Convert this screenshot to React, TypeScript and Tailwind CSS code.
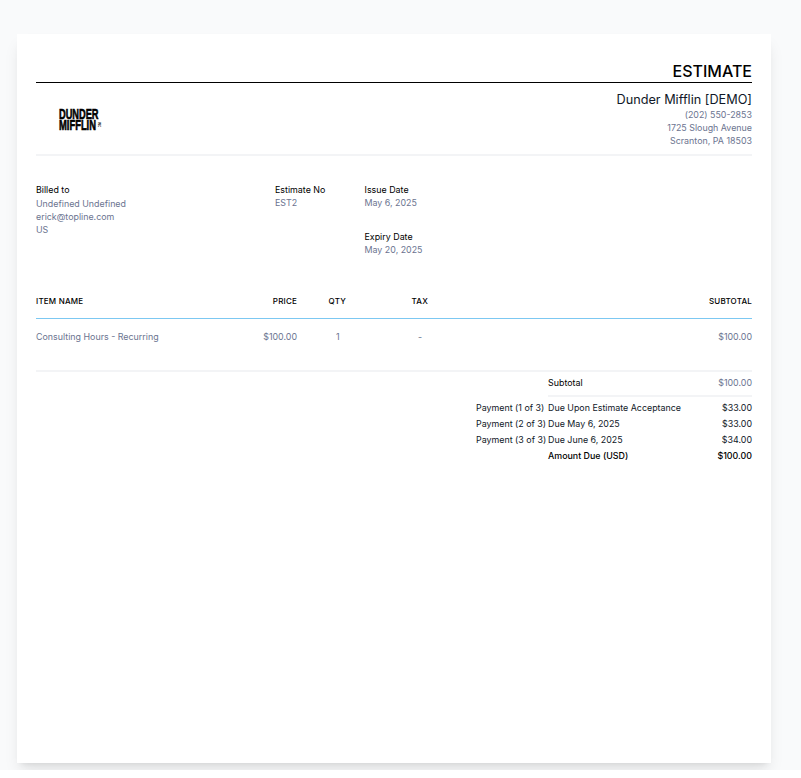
export default function App() {
  return (
    <div className="h-[770px] bg-gray-50 pt-[34px] pl-[17px] pr-[30px] font-['Inter',sans-serif] text-[8.9px] leading-[13px]">
      <div className="h-[729px] w-[754px] bg-white px-[19px] pt-[28px] shadow-lg">
        <div className="border-b border-black pb-[1px] text-right text-base leading-[19px] font-medium text-black">
          ESTIMATE
        </div>

        <div className="flex justify-between border-b-2 border-[#f3f4f6] pt-[8px] pb-[7px]">
          <div className="pt-[18px] pl-[23px]">
            <Logo />
          </div>
          <div className="text-right">
            <p className="text-[12.7px] leading-[17px] text-gray-900">Dunder Mifflin [DEMO]</p>
            <p className="text-[#6b7490]">(202) 550-2853</p>
            <p className="text-[#6b7490]">1725 Slough Avenue</p>
            <p className="text-[#6b7490]">Scranton, PA 18503</p>
          </div>
        </div>

        <div className="flex pt-[27px]">
          <div className="w-[239px]">
            <p className="mb-px text-black">Billed to</p>
            <p className="text-[#6b7490]">Undefined Undefined</p>
            <p className="text-[#6b7490]">erick@topline.com</p>
            <p className="text-[#6b7490]">US</p>
          </div>
          <div className="w-[89.5px]">
            <p className="text-black">Estimate No</p>
            <p className="text-[#6b7490]">EST2</p>
          </div>
          <div className="flex flex-col gap-[21px]">
            <div>
              <p className="text-black">Issue Date</p>
              <p className="text-[#6b7490]">May 6, 2025</p>
            </div>
            <div>
              <p className="text-black">Expiry Date</p>
              <p className="text-[#6b7490]">May 20, 2025</p>
            </div>
          </div>
        </div>

        <table className="mt-[33px] w-full table-fixed border-collapse">
          <thead>
            <tr className="text-[8px] tracking-wide text-black">
              <th className="w-[201px] border-b border-[#7cc8f2] pt-[6px] pb-[10px] text-left font-[450]">ITEM NAME</th>
              <th className="w-[60px] border-b border-[#7cc8f2] pt-[6px] pb-[10px] text-right font-[450]">PRICE</th>
              <th className="w-[49px] border-b border-[#7cc8f2] pt-[6px] pb-[10px] text-right font-[450]">QTY</th>
              <th className="w-[82px] border-b border-[#7cc8f2] pt-[6px] pb-[10px] text-right font-[450]">TAX</th>
              <th className="border-b border-[#7cc8f2] pt-[6px] pb-[10px] text-right font-[450]">SUBTOTAL</th>
            </tr>
          </thead>
          <tbody>
            <tr className="border-b-2 border-[#f3f4f6] text-[#6b7490]">
              <td className="pt-[11px] pb-[27px]">Consulting Hours - Recurring</td>
              <td className="pt-[11px] pb-[27px] text-right">$100.00</td>
              <td className="pt-[11px] pb-[27px] pl-[39px] text-left">1</td>
              <td className="pt-[11px] pb-[27px] pr-[6px] text-right">-</td>
              <td className="pt-[11px] pb-[27px] text-right">$100.00</td>
            </tr>
          </tbody>
        </table>

        <div className="ml-auto w-[276px] pt-[4px]">
          <div className="ml-[72px] flex justify-between border-b-2 border-[#f3f4f6] pb-[6px]">
            <span className="text-black">Subtotal</span>
            <span className="text-[#6b7490]">$100.00</span>
          </div>
          <div className="flex flex-col gap-[3px] pt-[4px] text-gray-900">
            <PaymentRow label="Payment (1 of 3)" due="Due Upon Estimate Acceptance" amount="$33.00" />
            <PaymentRow label="Payment (2 of 3)" due="Due May 6, 2025" amount="$33.00" />
            <PaymentRow label="Payment (3 of 3)" due="Due June 6, 2025" amount="$34.00" />
            <div className="ml-[72px] flex justify-between font-medium text-black">
              <span>Amount Due (USD)</span>
              <span>$100.00</span>
            </div>
          </div>
        </div>
      </div>
    </div>
  );
}

function PaymentRow({ label, due, amount }: { label: string; due: string; amount: string }) {
  return (
    <div className="flex">
      <span className="w-[72px] whitespace-nowrap">{label}</span>
      <span className="flex-1">{due}</span>
      <span>{amount}</span>
    </div>
  );
}

function Logo() {
  return (
    <div className="relative w-[40px] font-['Liberation_Sans',sans-serif] text-[14px] leading-[11px] font-bold text-black">
      <p className="w-[40px] origin-left scale-x-[0.66] whitespace-nowrap [-webkit-text-stroke:0.6px_black]">DUNDER</p>
      <p className="w-[37px] origin-left scale-x-[0.67] whitespace-nowrap [-webkit-text-stroke:0.6px_black]">MIFFLIN</p>
      <span className="absolute top-[13px] left-[38px] text-[3px] leading-[3px] [writing-mode:vertical-rl]">INC</span>
    </div>
  );
}
